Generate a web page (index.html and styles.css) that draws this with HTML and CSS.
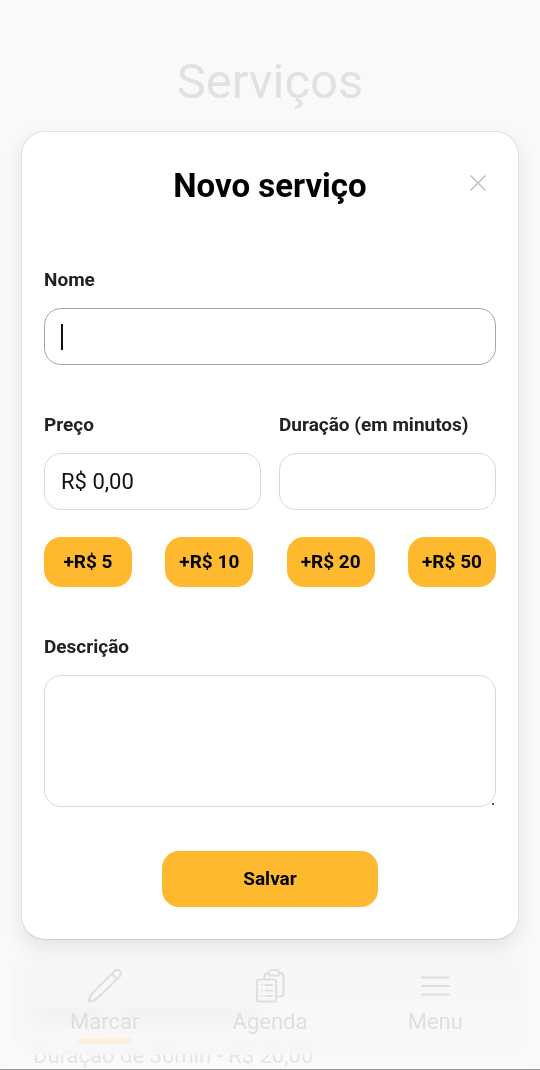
FILE: index.html
```html
<!DOCTYPE html>
<html lang="pt-BR">
<head>
<meta charset="utf-8">
<meta name="viewport" content="width=device-width, initial-scale=1">
<title>Serviços</title>
<link rel="stylesheet" href="styles.css">
</head>
<body>
<main class="page">
  <h1 class="page-title">Serviços</h1>
  <article class="service">
    <div class="service-name"><span class="smudge smudge-short"></span><span class="smudge smudge-long"></span></div>
    <p class="service-info">Duração de 30min - R$ 20,00</p>
  </article>
</main>

<nav class="tabbar">
  <a class="tab tab-active" href="#marcar">
    <svg class="tab-icon" viewBox="0 0 36 36" fill="none" stroke="currentColor" stroke-width="2.200" stroke-linecap="round" stroke-linejoin="round" aria-hidden="true"><path d="M2 33.500q0-5 3-8L27.500 3a3.700 3.700 0 0 1 5.300 5.300L10 30.500q-3 3-8 3zM25 6l5 5"/></svg>
    <span>Marcar</span>
  </a>
  <a class="tab" href="#agenda">
    <svg class="tab-icon" viewBox="0 0 36 36" fill="none" stroke="currentColor" stroke-width="2.200" stroke-linecap="round" stroke-linejoin="round" aria-hidden="true"><path d="M12.500 11V8q0-3 3.500-3M27.500 5q4 0 4 4v16.500q0 3-3 3H25M16.500 5.500q0-3.500 3.500-3.500h4q3.500 0 3.500 3.500q0 2-2 2h-7q-2 0-2-2z"/><rect x="5" y="11.500" width="19" height="22" rx="2"/><path d="M10 17h.1M13.500 17h6.500M10 22.500h.1M13.500 22.500h6.500M10 28h.1M13.500 28h6.500"/></svg>
    <span>Agenda</span>
  </a>
  <a class="tab" href="#menu">
    <svg class="tab-icon" viewBox="0 0 36 36" fill="none" stroke="currentColor" stroke-width="2" stroke-linecap="round" aria-hidden="true"><path d="M5 9.500h27M5 18h27M5 26.500h27"/></svg>
    <span>Menu</span>
  </a>
</nav>

<div class="overlay">
  <form class="dialog" role="dialog" aria-labelledby="dialog-title">
    <header class="dialog-header">
      <h2 class="dialog-title" id="dialog-title">Novo serviço</h2>
      <button class="close" type="button" aria-label="Fechar"><svg viewBox="0 0 16 16" width="16" height="16" fill="none" stroke="currentColor" stroke-width="1.400" aria-hidden="true"><path d="M.5.5l15 15M15.500.5l-15 15"/></svg></button>
    </header>

    <div class="field">
      <label for="nome">Nome</label>
      <div class="input-wrap">
        <input class="control control-focus" id="nome" type="text">
        <span class="caret"></span>
      </div>
    </div>

    <div class="row">
      <div class="field">
        <label for="preco">Preço</label>
        <input class="control" id="preco" type="text" value="R$ 0,00">
      </div>
      <div class="field">
        <label for="duracao">Duração (em minutos)</label>
        <input class="control" id="duracao" type="text">
      </div>
    </div>

    <div class="presets">
      <button class="button preset" type="button">+R$ 5</button>
      <button class="button preset" type="button">+R$ 10</button>
      <button class="button preset" type="button">+R$ 20</button>
      <button class="button preset" type="button">+R$ 50</button>
    </div>

    <div class="field">
      <label for="descricao">Descrição</label>
      <div class="input-wrap">
        <textarea class="control control-area" id="descricao"></textarea>
        <span class="grip"></span>
      </div>
    </div>

    <button class="button save" type="submit">Salvar</button>
  </form>
</div>
</body>
</html>
```
FILE: styles.css
```css
* {
  box-sizing: border-box;
}

body {
  margin: 0;
  background: #f9f9f9;
  color: #000;
  font-family: Roboto, "Liberation Sans", sans-serif;
}

h1, h2, p {
  margin: 0;
}

.page {
  display: flex;
  flex-direction: column;
  justify-content: space-between;
  height: 100vh;
  overflow: hidden;
  border-bottom: 1px solid #999;
}

.page-title {
  padding-top: 52px;
  color: #e1e1e1;
  font-size: 49px;
  font-weight: 400;
  line-height: 60px;
  text-align: center;
}

.service {
  margin: 0 10px;
  padding: 0 23px;
  background: #fafafa;
}

.service-name {
  display: flex;
  gap: 8px;
  padding-bottom: 20px;
}

.smudge {
  height: 16px;
  border-radius: 8px;
  background: #e6e6e6;
  filter: blur(5px);
}

.smudge-short {
  width: 76px;
}

.smudge-long {
  width: 140px;
}

.service-info {
  color: #e6e6e6;
  font-size: 22px;
  line-height: 26px;
}

.tabbar {
  position: fixed;
  right: 12px;
  bottom: 15px;
  left: 12px;
  display: grid;
  grid-template-columns: repeat(3, 1fr);
  padding: 13px 10px 11px;
  border-radius: 20px;
  background: rgba(247, 247, 247, 0.7);
  backdrop-filter: blur(4px);
}

.tab {
  display: flex;
  flex-direction: column;
  align-items: center;
  gap: 4px;
  color: #dfdfdf;
  font-size: 22px;
  line-height: 24px;
  text-decoration: none;
}

.tab::after {
  width: 55px;
  height: 6px;
  border-radius: 3px;
  content: "";
}

.tab-active::after {
  background: #fcefdf;
}

.tab-icon {
  width: 36px;
  height: 36px;
  margin-bottom: 2px;
}

.overlay {
  position: fixed;
  inset: 0;
  display: flex;
  flex-direction: column;
  justify-content: center;
  padding: 0 21px;
}

.dialog {
  display: flex;
  flex-direction: column;
  padding: 34px 22px 32px;
  border: 1px solid #e0e0e0;
  border-bottom-color: #d0d0d0;
  border-radius: 24px;
  background: #fff;
  box-shadow: 0 8px 20px rgba(0, 0, 0, 0.09);
}

.dialog-header {
  display: grid;
  grid-template-columns: 36px 1fr 36px;
  margin-bottom: 62px;
}

.dialog-title {
  grid-column: 2;
  font-size: 33px;
  font-weight: 700;
  line-height: 40px;
  text-align: center;
}

.close {
  display: grid;
  place-items: center;
  width: 36px;
  height: 34px;
  padding: 0;
  border: 0;
  background: none;
  color: #bbb;
}

.field {
  display: flex;
  flex-direction: column;
  gap: 16px;
  color: #222;
  font-size: 19px;
  font-weight: 700;
  line-height: 24px;
}

.control {
  display: block;
  width: 100%;
  height: 57px;
  padding: 0 16px;
  border: 1px solid #d9d9d9;
  border-radius: 17px;
  outline: 0;
  background: #fff;
  color: #111;
  font: 400 22px Roboto, "Liberation Sans", sans-serif;
}

.control-focus {
  border-color: #a5a5a5;
}

.control-area {
  height: 132px;
  padding: 16px;
  resize: none;
}

.input-wrap {
  position: relative;
}

.caret {
  position: absolute;
  top: 16px;
  left: 17px;
  width: 2px;
  height: 26px;
  background: #111;
}

.grip {
  position: absolute;
  right: 2px;
  bottom: 2px;
  width: 2px;
  height: 2px;
  background: #555;
}

.row {
  display: grid;
  grid-template-columns: 1fr 1fr;
  gap: 18px;
  margin: 48px 0 27px;
}

.presets {
  display: flex;
  justify-content: space-between;
  margin-bottom: 48px;
}

.button {
  padding: 0;
  border: 0;
  border-radius: 17px;
  background: #ffb92e;
  color: #000;
  font: 700 19px Roboto, "Liberation Sans", sans-serif;
}

.preset {
  width: 88px;
  height: 50px;
}

.save {
  align-self: center;
  width: 48%;
  height: 56px;
  margin-top: 44px;
}
```
